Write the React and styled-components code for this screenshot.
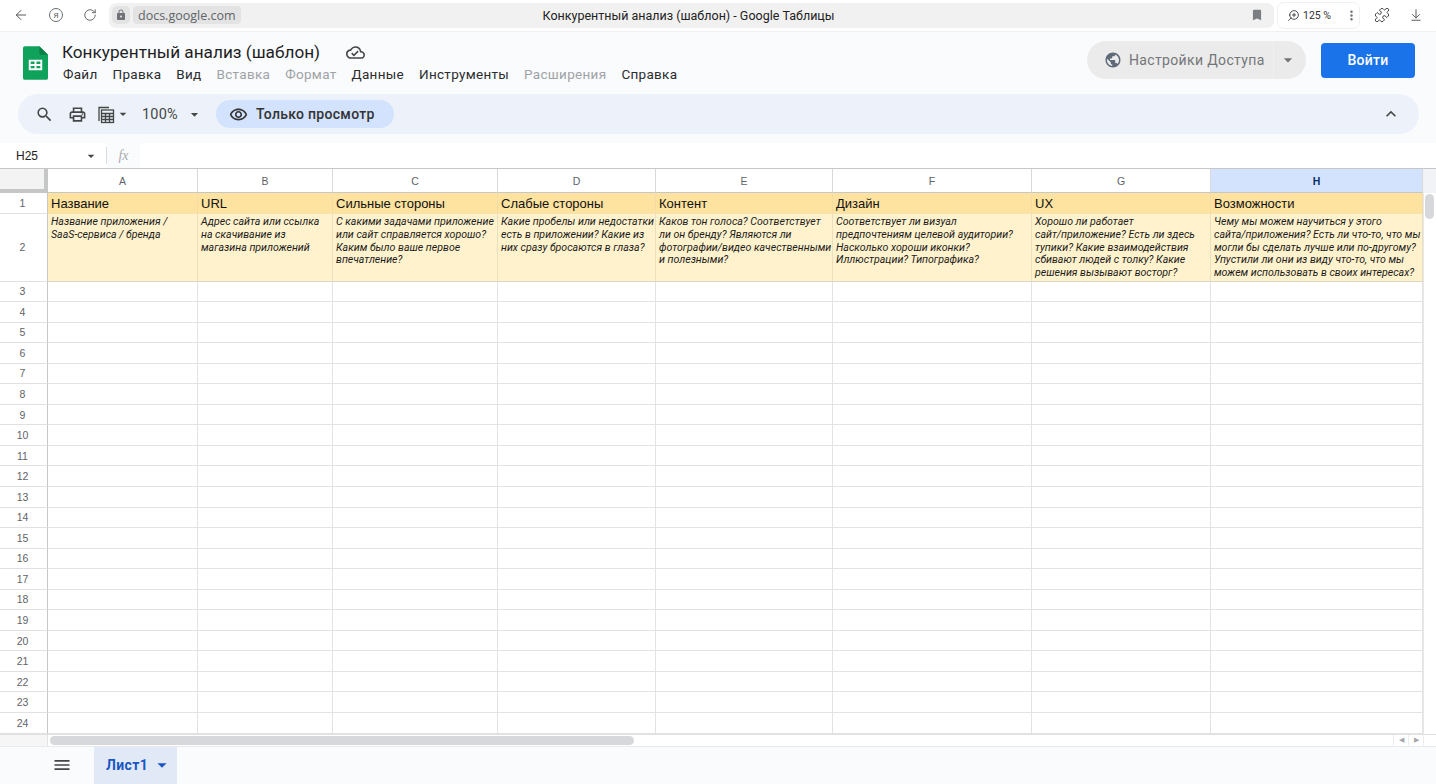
import React from 'react'
import styled, { createGlobalStyle } from 'styled-components'
import { MdSearch, MdOutlinePrint, MdPublic, MdOutlineRemoveRedEye, MdExpandLess, MdMenu, MdArrowDropDown, MdLock, MdBookmark, MdMoreVert, MdOutlineCloudDone } from 'react-icons/md'
import { LuZoomIn, LuArrowDownToLine, LuPuzzle, LuArrowLeft, LuRotateCw } from 'react-icons/lu'

const GlobalStyle = createGlobalStyle`
    html, body {
        margin: 0;
        height: 100%;
        overflow: hidden;
        background: #fff;
    }
    #root {
        height: 100%;
    }
    * {
        box-sizing: border-box;
    }
`

const Page = styled.div`
    height: 784px;
    display: flex;
    flex-direction: column;
    font-family: Roboto, "Liberation Sans", sans-serif;
    color: #1f1f1f;
`

/* browser chrome */
const BrowserBar = styled.div`
    height: 32px;
    flex-shrink: 0;
    display: flex;
    align-items: center;
    background: #fff;
    border-bottom: 1px solid #eef0f2;
    padding: 0 0 1px 13px;
`

const NavIcon = styled.span`
    width: ${({w}) => w || 34}px;
    display: flex;
    align-items: center;
    color: #55585c;
    flex-shrink: 0;
`

const YaBadge = styled.span`
    width: 14px;
    height: 14px;
    border: 1px solid #6b6e72;
    border-radius: 50%;
    display: flex;
    align-items: center;
    justify-content: center;
    font-size: 8px;
    color: #55585c;
`

const UrlBar = styled.div`
    flex: 0 0 1165px;
    height: 25px;
    background: #f1f1f1;
    border-radius: 7px;
    display: flex;
    align-items: center;
    padding: 0 10px 0 3px;
    position: relative;
`

const LockBox = styled.span`
    width: 18px;
    height: 18px;
    background: #e3e3e3;
    border-radius: 5px;
    display: flex;
    align-items: center;
    justify-content: center;
    color: #6f7276;
`

const HostBox = styled.span`
    margin-left: 3px;
    height: 18px;
    padding: 0 5px;
    background: #e3e3e3;
    border-radius: 4px;
    display: flex;
    align-items: center;
    font-size: 12.5px;
    color: #606368;
    font-family: "Open Sans", sans-serif;
`

const PageTitle = styled.span`
    position: absolute;
    left: 0;
    right: 6px;
    text-align: center;
    font-size: 12.5px;
    color: #222;
    pointer-events: none;
`

const BookmarkIcon = styled.span`
    margin-left: auto;
    display: flex;
    color: #7b7e82;
`

const ZoomPill = styled.div`
    margin-left: 3px;
    width: 83px;
    height: 27px;
    border: 1px solid #f1f1f1;
    border-radius: 7px;
    display: flex;
    align-items: center;
    padding-left: 9px;
    font-size: 10.5px;
    color: #333;
    gap: 3px;
    flex-shrink: 0;
    white-space: nowrap;
`

const MirrorIcon = styled.span`
    display: flex;
    transform: scaleX(-1);
`

const PillDivider = styled.span`
    width: 1px;
    height: 14px;
    background: #ececec;
    margin: 0 2px 0 5px;
`

const KebabIcon = styled.span`
    display: flex;
    color: #777;
`

const ChromeRight = styled.div`
    display: flex;
    align-items: center;
    color: #444;
    flex-shrink: 0;
    gap: 19px;
    margin-left: 14px;
`

/* docs header */
const Header = styled.div`
    height: 111px;
    flex-shrink: 0;
    background: #f9fbfd;
    display: flex;
    flex-direction: column;
`

const HeaderTop = styled.div`
    height: 62px;
    display: flex;
    align-items: center;
    padding: 0 21px 0 23px;
`

const TitleBlock = styled.div`
    margin: 0 0 2px 14px;
    display: flex;
    flex-direction: column;
    gap: 2px;
`

const TitleRow = styled.div`
    display: flex;
    align-items: center;
    gap: 26px;
    font-size: 17.2px;
    line-height: 22px;
    color: #1f1f1f;
    height: 22px;
`

const CloudIcon = styled.span`
    display: flex;
    color: #444746;
`

const MenuRow = styled.div`
    display: flex;
    gap: 15px;
    height: 18px;
    align-items: center;
    font-size: 13.5px;
    letter-spacing: 0.3px;
    margin-left: 1px;
`

const MenuItem = styled.span`
    color: ${({off}) => off ? '#a0a3a6' : '#2b2c2d'};
`

const ShareGroup = styled.div`
    margin: 0 0 6px auto;
    display: flex;
    height: 38px;
    border-radius: 19px;
    background: #ebebeb;
    overflow: hidden;
    color: #6f7478;
`

const ShareMain = styled.div`
    width: 187px;
    display: flex;
    align-items: center;
    gap: 7px;
    padding-left: 17px;
    font-size: 14px;
    letter-spacing: 0.35px;
    color: #737679;
    border-right: 1px solid #f1f1f1;
`

const ShareArrow = styled.div`
    width: 32px;
    display: flex;
    align-items: center;
    padding-left: 4px;
`

const LoginButton = styled.button`
    margin: 0 0 6px 15px;
    width: 94px;
    height: 35px;
    border: none;
    border-radius: 4px;
    background: #1a73e8;
    color: #fff;
    font-family: inherit;
    font-size: 14px;
    font-weight: 500;
    letter-spacing: 0.3px;
`

const Toolbar = styled.div`
    margin: 0 17px 0 18px;
    height: 40px;
    border-radius: 20px;
    background: #edf2fa;
    display: flex;
    align-items: center;
    color: #444746;
    padding-left: 17px;
    padding-right: 18px;
`

const ToolIcon = styled.span`
    display: flex;
    align-items: center;
    margin-left: ${({ml}) => ml || 0}px;
`

const ZoomValue = styled.span`
    margin-left: 11px;
    font-size: 14.5px;
    letter-spacing: 0.2px;
    color: #444746;
`

const ViewChip = styled.div`
    margin-left: 13px;
    height: 28px;
    width: 178px;
    border-radius: 14px;
    background: #d3e3fd;
    display: flex;
    align-items: center;
    gap: 8px;
    padding-left: 13px;
    font-size: 14px;
    font-weight: 500;
    letter-spacing: 0.3px;
    color: #333;
`

const Collapse = styled.span`
    margin-left: auto;
    display: flex;
`

/* formula bar */
const FormulaBar = styled.div`
    height: 26px;
    flex-shrink: 0;
    background: #fff;
    display: flex;
    align-items: center;
    border-bottom: 1px solid #c7c7c7;
`

const NameBox = styled.div`
    width: 107px;
    display: flex;
    align-items: center;
    padding-left: 16px;
    font-size: 12px;
    font-family: "Liberation Sans", sans-serif;
    color: #222;
    justify-content: space-between;
    padding-right: 7px;
    border-right: 1px solid #dadce0;
    height: 17px;
`

const FxBox = styled.div`
    width: 33px;
    height: 25px;
    background: #f9fbfd;
    display: flex;
    align-items: center;
    justify-content: center;
    font-family: "Liberation Serif", serif;
    font-style: italic;
    font-size: 14px;
    color: #a9abae;
`

/* grid */
const SheetGrid = styled.div`
    display: grid;
    grid-template-columns: 48px 150px 135px 165px 158px 177px 199px 179px 212px 13px;
    grid-template-rows: 24px 20.5px 68px repeat(22, 20.55px);
    height: 564.6px;
    flex-shrink: 0;
    font-family: "Liberation Sans", sans-serif;
    background: #fff;
`

const Corner = styled.div`
    background: #f3f3f3;
    border-right: 4px solid #c4c7c5;
    border-bottom: 4px solid #c4c7c5;
`

const ColHead = styled.div`
    display: flex;
    align-items: center;
    justify-content: center;
    font-size: 10.5px;
    color: ${({sel}) => sel ? '#0b2f66' : '#5f6368'};
    font-weight: ${({sel}) => sel ? 700 : 400};
    background: ${({sel}) => sel ? '#d3e3fd' : '#fff'};
    border-right: 1px solid #d9d9d9;
    border-bottom: 1px solid #c7c7c7;
`

const RowHead = styled.div`
    display: flex;
    align-items: center;
    justify-content: center;
    font-size: 10.5px;
    color: #5f6368;
    border-right: 1px solid #c7c7c7;
    border-bottom: 1px solid #e1e1e1;
    padding-right: 2px;
`

const GutterTop = styled.div`
    background: #f1f3f6;
`

const TitleCell = styled.div`
    background: #fee29f;
    border-right: 1px solid #f5dca6;
    border-bottom: 1px solid #f7e3b2;
    font-size: 13px;
    line-height: 21px;
    padding-left: 3px;
    color: #111;
    white-space: nowrap;
`

const NoteCell = styled.div`
    background: #fff2cc;
    border-right: 1px solid #ecdfbc;
    border-bottom: 1px solid #dcd5bf;
    font-family: Roboto, "Liberation Sans", sans-serif;
    font-size: 10.6px;
    font-style: italic;
    line-height: 12.75px;
    padding: 2.5px 0 0 3px;
    color: #1c1c1c;
    white-space: pre;
`

const Cell = styled.div`
    border-right: 1px solid #e3e3e3;
    border-bottom: 1px solid #e3e3e3;
`

const VertGutter = styled.div`
    grid-column: 10;
    grid-row: 2 / span 24;
    background: #fff;
    border-left: 1px solid #e8e8e8;
    padding: 1px 2px 0 1px;
`

const VertThumb = styled.div`
    height: 25px;
    border-radius: 5px;
    background: #d6d8db;
`

/* bottom */
const HScroll = styled.div`
    height: 13px;
    flex-shrink: 0;
    display: flex;
    background: #fff;
    border-top: 1px solid #e1e1e1;
    border-bottom: 1px solid #e8eaed;
`

const HScrollCorner = styled.div`
    width: 48px;
    background: #f6f6f6;
    border-right: 1px solid #e3e3e3;
    flex-shrink: 0;
`

const HTrack = styled.div`
    flex: 1;
    padding: 1px 0 0 2px;
`

const HThumb = styled.div`
    width: 584px;
    height: 9px;
    border-radius: 5px;
    background: #d6d8db;
`

const HArrow = styled.div`
    width: ${({w}) => w || 15}px;
    display: flex;
    align-items: center;
    justify-content: center;
    border-left: 1px solid #ededed;
    color: #a5a7aa;
    font-size: 7px;
    flex-shrink: 0;
`

const BottomBar = styled.div`
    flex: 1;
    background: #f9fbfd;
    display: flex;
    align-items: stretch;
    padding-left: 52px;
`

const AllSheets = styled.span`
    display: flex;
    align-items: center;
    color: #444746;
    width: 42px;
`

const SheetTab = styled.div`
    width: 83px;
    background: #e1e9f7;
    display: flex;
    align-items: center;
    padding-left: 12px;
    gap: 3px;
    color: #1a56c4;
    font-size: 14px;
    font-weight: 700;
    letter-spacing: 0.4px;
`

const columns = [
    {id: 'A', title: 'Название', note: 'Название приложения /\nSaaS-сервиса / бренда'},
    {id: 'B', title: 'URL', note: 'Адрес сайта или ссылка\nна скачивание из\nмагазина приложений'},
    {id: 'C', title: 'Сильные стороны', note: 'С какими задачами приложение\nили сайт справляется хорошо?\nКаким было ваше первое\nвпечатление?'},
    {id: 'D', title: 'Слабые стороны', note: 'Какие пробелы или недостатки\nесть в приложении? Какие из\nних сразу бросаются в глаза?'},
    {id: 'E', title: 'Контент', note: 'Каков тон голоса? Соответствует\nли он бренду? Являются ли\nфотографии/видео качественными\nи полезными?'},
    {id: 'F', title: 'Дизайн', note: 'Соответствует ли визуал\nпредпочтениям целевой аудитории?\nНасколько хороши иконки?\nИллюстрации? Типографика?'},
    {id: 'G', title: 'UX', note: 'Хорошо ли работает\nсайт/приложение? Есть ли здесь\nтупики? Какие взаимодействия\nсбивают людей с толку? Какие\nрешения вызывают восторг?'},
    {id: 'H', title: 'Возможности', note: 'Чему мы можем научиться у этого\nсайта/приложения? Есть ли что-то, что мы\nмогли бы сделать лучше или по-другому?\nУпустили ли они из виду что-то, что мы\nможем использовать в своих интересах?'},
]

const menu = [
    ['Файл'], ['Правка'], ['Вид'], ['Вставка', true], ['Формат', true], ['Данные'],
    ['Инструменты'], ['Расширения', true], ['Справка'],
]

const emptyRows = Array.from({length: 22}, (_, i) => i + 3)

const SheetsLogo = () => (
    <svg width="25" height="34" viewBox="0 0 26 35">
        <path d="M2 0h15l9 9v24a2 2 0 0 1-2 2H2a2 2 0 0 1-2-2V2a2 2 0 0 1 2-2z" fill="#0fa25b"/>
        <path d="M17 0l9 9h-7a2 2 0 0 1-2-2z" fill="#0b7f47"/>
        <path d="M6 14h14v11H6zM8 16v2.500h4V16zm6 0v2.500h4V16zm-6 4.500V23h4v-2.500zm6 0V23h4v-2.500z" fill="#fff" fillRule="evenodd"/>
    </svg>
)

const CalcIcon = () => (
    <svg width="19" height="19" viewBox="0 0 19 19" fill="none" stroke="#444746" strokeWidth="1.3">
        <path d="M3 16V2.500h10"/>
        <rect x="5.500" y="5" width="12" height="12.500"/>
        <path d="M5.500 8.500h12M5.500 11.500h12M5.500 14.500h12M9.500 8.500v9M13.500 8.500v9"/>
    </svg>
)

const App = () => {
    return (
        <Page>
            <GlobalStyle/>
            <BrowserBar>
                <NavIcon w={36}><LuArrowLeft size={16} strokeWidth={1.5}/></NavIcon>
                <NavIcon w={34}><YaBadge>Я</YaBadge></NavIcon>
                <NavIcon w={26}><LuRotateCw size={14} strokeWidth={1.5}/></NavIcon>
                <UrlBar>
                    <LockBox><MdLock size={12}/></LockBox>
                    <HostBox>docs.google.com</HostBox>
                    <PageTitle>Конкурентный анализ (шаблон) - Google Таблицы</PageTitle>
                    <BookmarkIcon><MdBookmark size={14}/></BookmarkIcon>
                </UrlBar>
                <ZoomPill>
                    <MirrorIcon><LuZoomIn size={13} strokeWidth={1.6}/></MirrorIcon>
                    125 %
                    <PillDivider/>
                    <KebabIcon><MdMoreVert size={15}/></KebabIcon>
                </ZoomPill>
                <ChromeRight>
                    <LuPuzzle size={16} strokeWidth={1.5}/>
                    <LuArrowDownToLine size={14} strokeWidth={1.5}/>
                </ChromeRight>
            </BrowserBar>

            <Header>
                <HeaderTop>
                    <SheetsLogo/>
                    <TitleBlock>
                        <TitleRow>
                            Конкурентный анализ (шаблон)
                            <CloudIcon><MdOutlineCloudDone size={19}/></CloudIcon>
                        </TitleRow>
                        <MenuRow>
                            {menu.map(([name, off]) => <MenuItem key={name} off={off}>{name}</MenuItem>)}
                        </MenuRow>
                    </TitleBlock>
                    <ShareGroup>
                        <ShareMain><MdPublic size={18} color="#5f6b78"/>Настройки Доступа</ShareMain>
                        <ShareArrow><MdArrowDropDown size={20}/></ShareArrow>
                    </ShareGroup>
                    <LoginButton>Войти</LoginButton>
                </HeaderTop>
                <Toolbar>
                    <ToolIcon><MdSearch size={19}/></ToolIcon>
                    <ToolIcon ml={14}><MdOutlinePrint size={19}/></ToolIcon>
                    <ToolIcon ml={9}><CalcIcon/></ToolIcon>
                    <ToolIcon><MdArrowDropDown size={16}/></ToolIcon>
                    <ZoomValue>100%</ZoomValue>
                    <ToolIcon ml={8}><MdArrowDropDown size={17}/></ToolIcon>
                    <ViewChip><MdOutlineRemoveRedEye size={19}/>Только просмотр</ViewChip>
                    <Collapse><MdExpandLess size={20}/></Collapse>
                </Toolbar>
            </Header>

            <FormulaBar>
                <NameBox>H25<MdArrowDropDown size={16} color="#444"/></NameBox>
                <FxBox>fx</FxBox>
            </FormulaBar>

            <SheetGrid>
                <Corner/>
                {columns.map(c => <ColHead key={c.id} sel={c.id === 'H'}>{c.id}</ColHead>)}
                <GutterTop/>

                <RowHead>1</RowHead>
                {columns.map(c => <TitleCell key={c.id}>{c.title}</TitleCell>)}
                <VertGutter><VertThumb/></VertGutter>

                <RowHead>2</RowHead>
                {columns.map(c => <NoteCell key={c.id}>{c.note}</NoteCell>)}

                {emptyRows.map(n => (
                    <React.Fragment key={n}>
                        <RowHead>{n}</RowHead>
                        {columns.map(c => <Cell key={c.id}/>)}
                    </React.Fragment>
                ))}
            </SheetGrid>

            <HScroll>
                <HScrollCorner/>
                <HTrack><HThumb/></HTrack>
                <HArrow>◀</HArrow>
                <HArrow>▶</HArrow>
                <HArrow w={13}/>
            </HScroll>

            <BottomBar>
                <AllSheets><MdMenu size={20}/></AllSheets>
                <SheetTab>Лист1<MdArrowDropDown size={22}/></SheetTab>
            </BottomBar>
        </Page>
    )
}

export default App
